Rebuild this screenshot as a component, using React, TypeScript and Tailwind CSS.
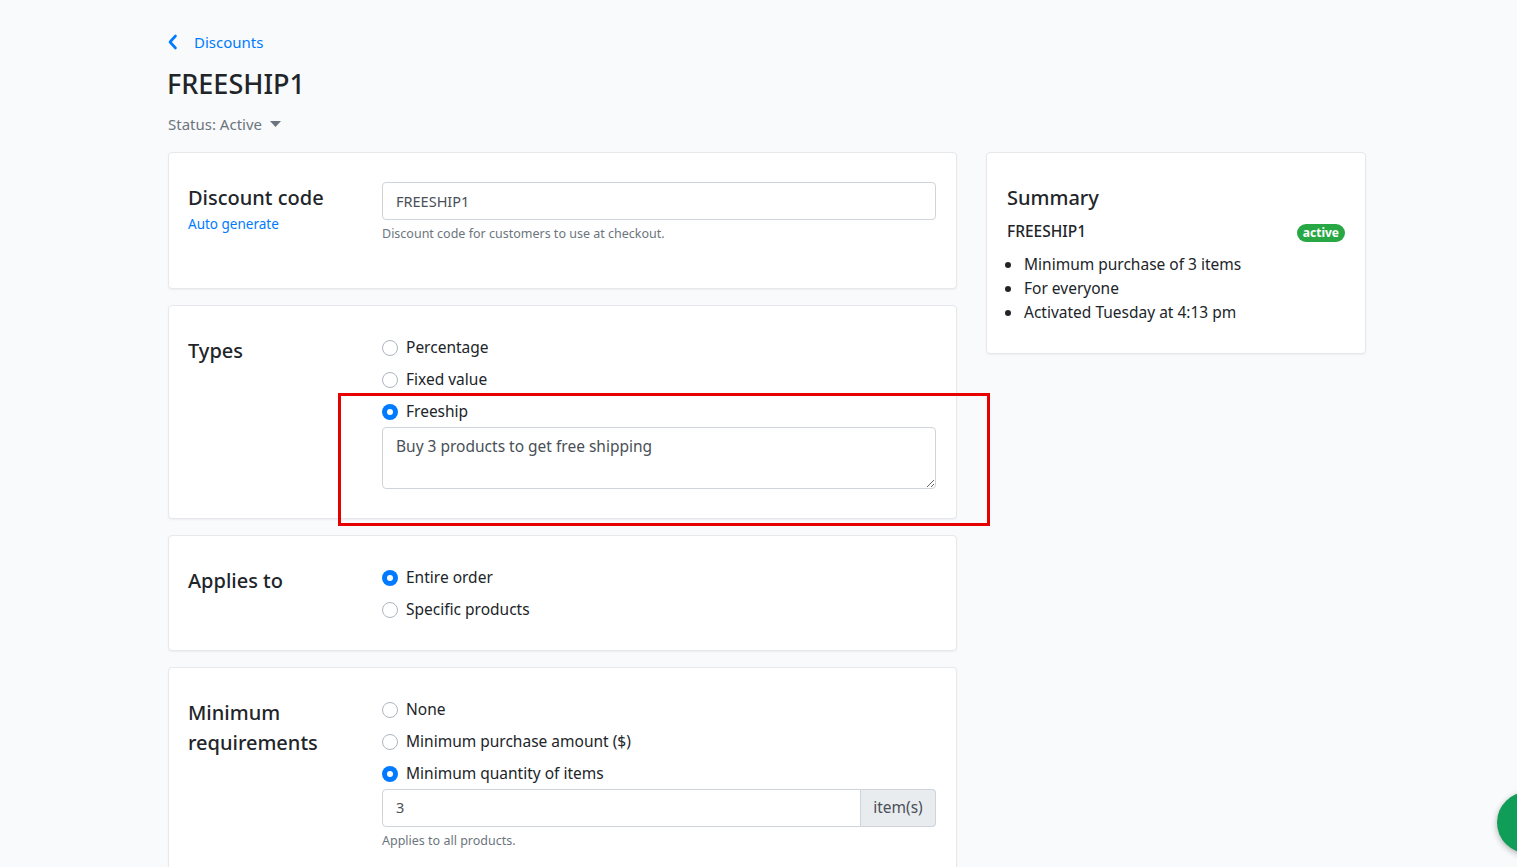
import React from "react";

const font = { fontFamily: '"Noto Sans", "Open Sans", sans-serif' };

function Radio({ label, checked }: { label: string; checked?: boolean }) {
  return (
    <label className="flex items-center gap-2 h-6 text-[15.5px] text-[#212529]">
      {checked ? (
        <span className="w-4 h-4 rounded-full bg-[#007bff] flex items-center justify-center">
          <span className="w-[6px] h-[6px] rounded-full bg-white" />
        </span>
      ) : (
        <span className="w-4 h-4 rounded-full border border-[#adb5bd] bg-white" />
      )}
      <span>{label}</span>
    </label>
  );
}

function Card({ children, className = "" }: { children: React.ReactNode; className?: string }) {
  return (
    <div className={"bg-white border border-[#e6e8ec] rounded shadow-[0_1px_2px_rgba(0,0,0,0.05)] " + className}>
      {children}
    </div>
  );
}

function Section({ title, children, pb = "pb-[29px]" }: { title: React.ReactNode; children: React.ReactNode; pb?: string }) {
  return (
    <Card className={"pl-[19px] pr-5 pt-[29px] " + pb}>
      <div className="grid grid-cols-[194px_1fr]">
        <div className="text-[20px] leading-[30px] font-medium text-[#212529] mt-[1px]">{title}</div>
        <div>{children}</div>
      </div>
    </Card>
  );
}

export default function App() {
  return (
    <div className="min-h-screen bg-[#f9fafb] relative overflow-hidden" style={font}>
      <div className="pl-[168px] pt-[30px]">
        <a className="flex items-center gap-4 h-6 text-[15px] text-[#007bff]">
          <svg width="10" height="16" viewBox="0 0 10 16">
            <polyline points="7.5,2 2,8 7.5,14" fill="none" stroke="#007bff" strokeWidth="2.6" strokeLinecap="round" strokeLinejoin="round" />
          </svg>
          <span>Discounts</span>
        </a>
        <h1 className="mt-[13px] -ml-[1px] text-[27px] leading-[34px] font-medium text-[#212529]">FREESHIP1</h1>
        <div className="mt-[11px] flex items-center gap-2 h-6 text-[15px] text-[#6c757d]">
          <span>Status: Active</span>
          <svg width="11" height="6" viewBox="0 0 11 6">
            <polygon points="0,0 11,0 5.5,6" fill="#6c757d" />
          </svg>
        </div>

        <div className="mt-4 flex gap-[29px] items-start">
          <div className="w-[789px] flex flex-col gap-4">
            <Card className="pl-[19px] pr-5 pt-[29px] pb-[44px]">
              <div className="grid grid-cols-[194px_1fr]">
                <div className="mt-[1px]">
                  <div className="text-[20px] leading-[30px] font-medium text-[#212529]">Discount code</div>
                  <a className="block text-[13.5px] leading-5 text-[#007bff] mt-[1px]">Auto generate</a>
                </div>
                <div>
                  <input
                    readOnly
                    value="FREESHIP1"
                    className="w-full h-[38px] px-[13px] border border-[#ced4da] rounded text-[14.5px] text-[#495057] bg-white outline-none"
                  />
                  <div className="mt-1 text-[12.5px] leading-5 text-[#6c757d]">Discount code for customers to use at checkout.</div>
                </div>
              </div>
            </Card>

            <Section title="Types">
              <div className="pt-[1px] flex flex-col gap-2">
                <Radio label="Percentage" />
                <Radio label="Fixed value" />
                <Radio label="Freeship" checked />
              </div>
              <textarea
                readOnly
                value="Buy 3 products to get free shipping"
                className="mt-[3px] block w-full h-[62px] px-[13px] py-[6px] border border-[#ced4da] rounded text-[15.5px] leading-6 text-[#495057] bg-white outline-none"
              />
            </Section>

            <Section title="Applies to" pb="pb-[28px]">
              <div className="pt-[1px] flex flex-col gap-2">
                <Radio label="Entire order" checked />
                <Radio label="Specific products" />
              </div>
            </Section>

            <Section title={<>Minimum<br />requirements</>}>
              <div className="pt-[1px] flex flex-col gap-2">
                <Radio label="None" />
                <Radio label="Minimum purchase amount ($)" />
                <Radio label="Minimum quantity of items" checked />
              </div>
              <div className="mt-[3px] flex h-[38px]">
                <input
                  readOnly
                  value="3"
                  className="flex-1 min-w-0 px-[13px] border border-[#ced4da] rounded-l text-[14.5px] text-[#495057] bg-white outline-none"
                />
                <span className="w-[75px] flex items-center justify-center border border-l-0 border-[#ced4da] rounded-r bg-[#e9ecef] text-[15.5px] text-[#495057]">
                  item(s)
                </span>
              </div>
              <div className="mt-1 text-[12.5px] leading-5 text-[#6c757d]">Applies to all products.</div>
              <div className="h-20" />
            </Section>
          </div>

          <Card className="w-[380px] px-5 pt-[29px] pb-[29px]">
            <div className="text-[20px] leading-[30px] font-medium text-[#212529] mt-[1px] -mb-[1px]">Summary</div>
            <div className="mt-2 flex items-center justify-between h-6">
              <span className="text-[15.5px] font-medium text-[#212529]">FREESHIP1</span>
              <span className="px-[6px] h-[18px] mt-[2px] flex items-center rounded-full bg-[#28a745] text-white text-[12px] font-bold">active</span>
            </div>
            <ul className="mt-2 pl-[16px] list-disc text-[15.5px] leading-6 text-[#212529] marker:text-[#212529]">
              <li className="pl-[1px]">Minimum purchase of 3 items</li>
              <li className="pl-[1px]">For everyone</li>
              <li className="pl-[1px]">Activated Tuesday at 4:13 pm</li>
            </ul>
          </Card>
        </div>
      </div>

      <div className="absolute left-[338px] top-[393px] w-[652px] h-[133px] border-[3px] border-[#e60000] pointer-events-none" />

      <div className="fixed left-[1497px] top-[792px] w-[61px] h-[61px] rounded-full bg-[#0f9d58] shadow-[0_2px_6px_rgba(0,0,0,0.3)]" />
    </div>
  );
}
